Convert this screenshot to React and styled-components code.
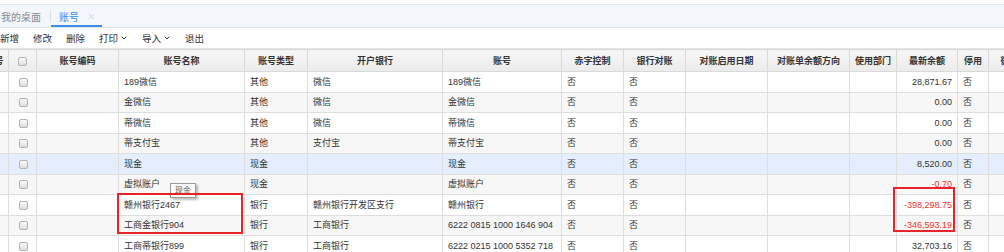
import styled, { createGlobalStyle } from 'styled-components';
import { ChevronDown, X } from 'lucide-react';

const GlobalStyle = createGlobalStyle`
  html, body {
    margin: 0;
    padding: 0;
    background: #fff;
  }
  body {
    font-family: "Liberation Sans", "Noto Sans CJK SC", sans-serif;
    font-size: 9px;
    color: #333;
  }
`;

const columns = [
  { title: '序号', width: 28 },
  { title: '', width: 28, check: true },
  { title: '账号编码', width: 82 },
  { title: '账号名称', width: 126 },
  { title: '账号类型', width: 63 },
  { title: '开户银行', width: 135 },
  { title: '账号', width: 119 },
  { title: '赤字控制', width: 62 },
  { title: '银行对账', width: 62 },
  { title: '对账启用日期', width: 82 },
  { title: '对账单余额方向', width: 82 },
  { title: '使用部门', width: 47 },
  { title: '最新余额', width: 61 },
  { title: '停用', width: 31 },
  { title: '微信账号', width: 60 },
];

const rows = [
  { name: '189微信', type: '其他', bank: '微信', no: '189微信', balance: '28,871.67' },
  { name: '金微信', type: '其他', bank: '微信', no: '金微信', balance: '0.00' },
  { name: '蒂微信', type: '其他', bank: '微信', no: '蒂微信', balance: '0.00' },
  { name: '蒂支付宝', type: '其他', bank: '支付宝', no: '蒂支付宝', balance: '0.00' },
  { name: '现金', type: '现金', bank: '', no: '现金', balance: '8,520.00', selected: true },
  { name: '虚拟账户', type: '现金', bank: '', no: '虚拟账户', balance: '-0.70' },
  { name: '赣州银行2467', type: '银行', bank: '赣州银行开发区支行', no: '赣州银行', balance: '-398,298.75' },
  { name: '工商金银行904', type: '银行', bank: '工商银行', no: '6222 0815 1000 1646 904', balance: '-346,593.19' },
  { name: '工商蒂银行899', type: '银行', bank: '工商银行', no: '6222 0215 1000 5352 718', balance: '32,703.16' },
];

const tools = [
  { label: '新增' },
  { label: '修改' },
  { label: '删除' },
  { label: '打印', menu: true },
  { label: '导入', menu: true },
  { label: '退出' },
];

export default function App() {
  return (
    <Page>
      <GlobalStyle />
      <TabBar>
        <Tab>我的桌面</Tab>
        <TabDivider />
        <Tab $active>
          账号
          <CloseIcon>
            <X size={9} strokeWidth={1.6} />
          </CloseIcon>
        </Tab>
      </TabBar>

      <Toolbar>
        {tools.map((t) => (
          <ToolButton key={t.label}>
            {t.label}
            {t.menu && <ChevronDown size={8} strokeWidth={3} />}
          </ToolButton>
        ))}
      </Toolbar>

      <GridViewport>
        <Grid>
          <colgroup>
            {columns.map((c, i) => (
              <col key={i} style={{ width: c.width }} />
            ))}
          </colgroup>
          <thead>
            <tr>
              {columns.map((c, i) => (
                <HeadCell key={i}>{c.check ? <Checkbox /> : c.title}</HeadCell>
              ))}
            </tr>
          </thead>
          <tbody>
            {rows.map((r, i) => (
              <Row key={r.name} $striped={i % 2 === 1} $selected={r.selected}>
                <Cell>{i + 1}</Cell>
                <Cell $center>
                  <Checkbox />
                </Cell>
                <Cell />
                <Cell>{r.name}</Cell>
                <Cell>{r.type}</Cell>
                <Cell>{r.bank}</Cell>
                <Cell>{r.no}</Cell>
                <Cell>否</Cell>
                <Cell>否</Cell>
                <Cell />
                <Cell />
                <Cell />
                <Cell $right $negative={r.balance.startsWith('-')}>
                  {r.balance}
                </Cell>
                <Cell>否</Cell>
                <Cell />
              </Row>
            ))}
          </tbody>
        </Grid>
      </GridViewport>

      <Tooltip>现金</Tooltip>
      <Marker $left={117} $top={193} $width={126} $height={41} />
      <Marker $left={893} $top={187} $width={62} $height={45} />
    </Page>
  );
}

const Page = styled.div`
  position: relative;
  width: 1004px;
  height: 252px;
  overflow: hidden;
`;

const TabBar = styled.div`
  margin-top: 4px;
  height: 22px;
  display: flex;
  align-items: stretch;
  background: #f3f6fb;
  border-top: 1px solid #e3e7ee;
  border-bottom: 1px solid #dfe3ea;
`;

const Tab = styled.div`
  display: flex;
  align-items: center;
  gap: 8px;
  padding: ${({ $active }) => ($active ? '0 6px 0 8px' : '0 9px 0 1px')};
  color: ${({ $active }) => ($active ? '#3d8ee8' : '#8a8a8a')};
  font-size: 10px;
  box-shadow: ${({ $active }) => ($active ? 'inset 0 -2px 0 #3d8ee8' : 'none')};
`;

const TabDivider = styled.span`
  width: 1px;
  margin: 5px 0;
  background: #dde2ea;
`;

const CloseIcon = styled.span`
  display: flex;
  color: #b9bec6;
`;

const Toolbar = styled.div`
  height: 20px;
  display: flex;
  align-items: center;
  gap: 14px;
  border-bottom: 1px solid #e4e4e4;
`;

const ToolButton = styled.span`
  display: flex;
  align-items: center;
  gap: 2px;
  color: #333;
  font-size: 9.5px;
`;

const GridViewport = styled.div`
  overflow: hidden;
`;

const Grid = styled.table`
  margin-left: -20px;
  table-layout: fixed;
  border-collapse: collapse;
  width: 1068px;
`;

const HeadCell = styled.th`
  height: 21px;
  padding: 0 2px;
  border: 1px solid #d9d9d9;
  background: linear-gradient(#f7f7f7, #ebebeb);
  font-weight: bold;
  font-size: 9px;
  color: #333;
  text-align: center;
  white-space: nowrap;
  overflow: hidden;
`;

const Row = styled.tr`
  height: 20.5px;
  background: ${({ $selected, $striped }) =>
    $selected ? '#e4eefc' : $striped ? '#f7f7f7' : '#fff'};
`;

const Cell = styled.td`
  padding: 0 ${({ $right }) => ($right ? '5px' : '4px')} 0 5px;
  border: 1px solid #dedede;
  font-size: 9px;
  color: ${({ $negative }) => ($negative ? '#f5312f' : '#333')};
  text-align: ${({ $right, $center }) => ($right ? 'right' : $center ? 'center' : 'left')};
  white-space: nowrap;
  overflow: hidden;
  line-height: 12px;
`;

const Checkbox = styled.span`
  display: inline-block;
  vertical-align: middle;
  width: 7px;
  height: 7px;
  border: 1px solid #b3b3b3;
  border-radius: 2px;
  background: linear-gradient(#fbfbfb, #dedede);
`;

const Tooltip = styled.div`
  position: absolute;
  left: 170px;
  top: 183px;
  padding: 0 4px;
  height: 13px;
  line-height: 13px;
  font-size: 8px;
  color: #555;
  background: #fafafa;
  border: 1px solid #9a9a9a;
  box-shadow: 2px 2px 2px rgba(0, 0, 0, 0.25);
`;

const Marker = styled.div`
  position: absolute;
  left: ${({ $left }) => $left}px;
  top: ${({ $top }) => $top}px;
  width: ${({ $width }) => $width}px;
  height: ${({ $height }) => $height}px;
  border: 2px solid #e8242b;
  box-sizing: border-box;
`;
